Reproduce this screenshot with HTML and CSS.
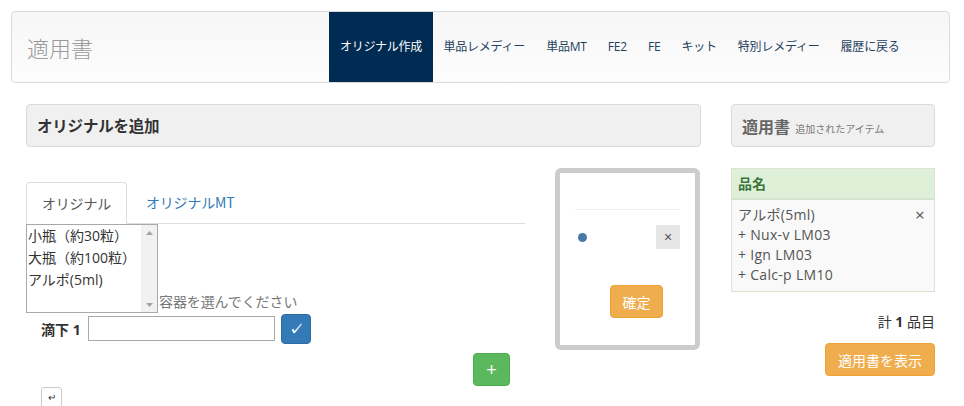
FILE: index.html
```html
<!DOCTYPE html>
<html lang="ja">
<head>
<meta charset="utf-8">
<title>適用書</title>
<link rel="stylesheet" href="styles.css">
</head>
<body>
<div class="page">
  <nav class="navbar">
    <div class="brand">適用書</div>
    <ul class="nav">
      <li class="active">オリジナル作成</li>
      <li>単品レメディー</li>
      <li>単品MT</li>
      <li>FE2</li>
      <li>FE</li>
      <li>キット</li>
      <li>特別レメディー</li>
      <li>履歴に戻る</li>
    </ul>
  </nav>
  <div class="main">
    <div class="left">
      <div class="panel-head"><h3 class="title">オリジナルを追加</h3></div>
      <div class="work">
        <div class="tabs-area">
          <ul class="tabs">
            <li class="tab active">オリジナル</li>
            <li class="tab">オリジナルMT</li>
          </ul>
          <div class="select-row">
            <div class="listbox">
              <div class="opts">
                <div class="opt">小瓶（約30粒）</div>
                <div class="opt">大瓶（約100粒）</div>
                <div class="opt">アルポ(5ml)</div>
              </div>
              <div class="sb">
                <svg class="arrow" width="7" height="4" viewBox="0 0 7 4"><path d="M0 4 L3.5 0 L7 4 Z" fill="#a3a3a3"/></svg>
                <svg class="arrow" width="7" height="4" viewBox="0 0 7 4"><path d="M0 0 L3.5 4 L7 0 Z" fill="#a3a3a3"/></svg>
              </div>
            </div>
            <span class="hint">容器を選んでください</span>
          </div>
          <div class="drop-row">
            <label class="drop-label">滴下 1</label>
            <input class="drop-input" type="text">
            <button class="btn-check">✓</button>
          </div>
          <div class="add-row"><button class="btn-add">+</button></div>
          <button class="btn-back">↵</button>
        </div>
        <div class="preview">
          <div class="rule"></div>
          <div class="prev-row"><span class="dot"></span><button class="btn-x">×</button></div>
          <button class="btn-confirm">確定</button>
        </div>
      </div>
    </div>
    <div class="right">
      <div class="panel-head"><h3 class="title-r">適用書 <small class="sub">追加されたアイテム</small></h3></div>
      <div class="cart">
        <div class="cart-head">品名</div>
        <div class="cart-body">
          <div class="cart-line"><span>アルポ(5ml)</span><span class="remove">×</span></div>
          <div class="cart-line">+ Nux-v LM03</div>
          <div class="cart-line">+ Ign LM03</div>
          <div class="cart-line">+ Calc-p LM10</div>
        </div>
      </div>
      <div class="total">計 <b>1</b> 品目</div>
      <div class="show-row"><button class="btn-show">適用書を表示</button></div>
    </div>
  </div>
</div>
</body>
</html>
```

FILE: styles.css
```css
* { box-sizing: border-box; }
html, body { margin: 0; padding: 0; background: #fff; }
body {
  font-family: "Open Sans", "Noto Sans CJK JP", sans-serif;
  font-size: 14px;
  color: #333;
}
.page { padding: 11px 14px 0 11px; }

.navbar {
  display: flex;
  height: 72px;
  border: 1px solid #dcdcdc;
  border-radius: 4px;
  background: linear-gradient(to bottom, #f6f6f6, #fdfdfd);
}
.brand {
  width: 317px;
  padding-left: 15px;
  font-size: 22px;
  line-height: 70px;
  color: #9a9a9a;
  font-family: "Noto Sans CJK JP", sans-serif;
  font-weight: 300;
}
.nav {
  list-style: none;
  margin: 0;
  padding: 0;
  display: flex;
}
.nav li {
  padding: 0 10.5px;
  line-height: 70px;
  font-size: 12px;
  letter-spacing: -0.2px;
  color: #1f3f5f;
}
.nav li.active {
  background: #002b52;
  color: #fff;
  padding: 0 11px;
  letter-spacing: -0.3px;
}

.main {
  display: grid;
  grid-template-columns: 675px 204px;
  gap: 30px;
  padding: 21px 15px 0 15px;
}

.panel-head {
  height: 43px;
  background: #f0f0f0;
  border: 1px solid #dadada;
  border-radius: 4px;
  display: flex;
  align-items: center;
  padding-left: 10px;
}
.title {
  margin: 0;
  font-size: 15.5px;
  font-weight: bold;
  color: #333;
  letter-spacing: -0.2px;
}
.title-r {
  margin: 0;
  font-size: 16px;
  font-weight: bold;
  color: #666;
}
.sub {
  font-size: 10px;
  font-weight: normal;
  color: #777;
  margin-left: 1px;
}

.work {
  display: flex;
  gap: 30px;
  margin-top: 21px;
}
.tabs-area { width: 499px; padding-top: 14px; }
.tabs {
  list-style: none;
  margin: 0;
  padding: 0;
  display: flex;
  border-bottom: 1px solid #ddd;
  height: 42px;
}
.tab {
  padding: 0 18px 0 19px;
  line-height: 40px;
  color: #337ab7;
  font-family: "Noto Sans CJK JP", sans-serif;
  font-size: 14px;
  letter-spacing: -0.2px;
}
.tab.active {
  color: #555;
  background: #fff;
  border: 1px solid #ddd;
  border-bottom-color: #fff;
  border-radius: 4px 4px 0 0;
  height: 42px;
  padding: 0 15px;
}

.select-row { display: flex; align-items: flex-end; }
.listbox {
  width: 132px;
  height: 89px;
  border: 1px solid #a9a9a9;
  display: flex;
  background: #fff;
}
.opts { flex: 1; min-width: 0; overflow: hidden; }
.opt {
  line-height: 22px;
  font-size: 14px;
  color: #333;
  white-space: nowrap;
  letter-spacing: 0;
  padding-left: 1px;
}
.sb {
  width: 16px;
  flex: none;
  background: #f1f1f1;
  display: flex;
  flex-direction: column;
  justify-content: space-between;
  align-items: center;
  padding: 6px 0 5px;
}
.hint {
  color: #777;
  font-size: 14px;
  line-height: 18px;
  margin: 0 0 2px 1px;
  letter-spacing: -0.1px;
}

.drop-row {
  display: flex;
  align-items: center;
  height: 31px;
  padding-left: 15px;
}
.drop-label {
  font-weight: bold;
  font-size: 14px;
  color: #333;
  width: 47px;
  letter-spacing: 0;
}
.drop-input {
  width: 187px;
  height: 25px;
  border: 1px solid #a9a9a9;
  margin: 0;
  padding: 0;
}
.btn-check {
  margin-left: 6px;
  width: 30px;
  height: 30px;
  border: 1px solid #2e6da4;
  border-radius: 4px;
  background: #337ab7;
  color: #fff;
  font-size: 14px;
  font-weight: bold;
  padding: 0;
}

.add-row {
  display: flex;
  justify-content: flex-end;
  padding-right: 15px;
  margin-top: 9px;
}
.btn-add {
  width: 37px;
  height: 33px;
  border: 1px solid #4cae4c;
  border-radius: 4px;
  background: #5cb85c;
  color: #fff;
  font-size: 18px;
  line-height: 1;
  padding: 0;
}
.btn-back {
  display: block;
  margin: 1px 0 0 15px;
  width: 21px;
  height: 22px;
  border: 1px solid #ccc;
  border-radius: 3px;
  background: #fff;
  color: #333;
  font-size: 10px;
  padding: 0;
  line-height: 1;
}

.preview {
  width: 145px;
  height: 182px;
  border: 5px solid #cccccc;
  border-radius: 6px;
  padding: 0 15px 0 15px;
  background: #fff;
}
.rule {
  margin-top: 36px;
  border-top: 1px solid #eee;
}
.prev-row {
  display: flex;
  justify-content: space-between;
  align-items: center;
  margin-top: 15px;
}
.dot {
  width: 9px;
  height: 9px;
  border-radius: 50%;
  background: #4a79a5;
  margin-left: 3px;
}
.btn-x {
  width: 24px;
  height: 24px;
  border: none;
  background: #e6e6e6;
  color: #555;
  font-size: 14px;
  padding: 0;
  line-height: 1;
}
.btn-confirm {
  display: block;
  margin: 36px 0 0 35px;
  width: 53px;
  height: 33px;
  border: 1px solid #eea236;
  border-radius: 4px;
  background: #f0ad4e;
  color: #fff;
  font-family: "Noto Sans CJK JP", sans-serif;
  font-size: 14px;
  padding: 0;
}

.cart {
  margin-top: 21px;
  border: 1px solid #dde3d0;
}
.cart-head {
  height: 31px;
  background: #dff0d8;
  border-bottom: 2px solid #d6e3cf;
  color: #3c763d;
  font-weight: bold;
  font-size: 14px;
  line-height: 29px;
  padding-left: 6px;
}
.cart-body {
  background: #f9f9f9;
  padding: 5px 0 6px 6px;
}
.cart-line {
  display: flex;
  justify-content: space-between;
  line-height: 20px;
  font-size: 14px;
  color: #555;
  letter-spacing: 0.3px;
}
.remove {
  font-size: 17px;
  color: #555;
  width: 19px;
  text-align: left;
}

.total {
  margin-top: 20px;
  text-align: right;
  line-height: 20px;
  font-size: 14px;
  color: #333;
}
.show-row { display: flex; justify-content: flex-end; margin-top: 11px; }
.btn-show {
  width: 110px;
  height: 33px;
  border: 1px solid #eea236;
  border-radius: 4px;
  background: #f0ad4e;
  color: #fff;
  font-family: "Noto Sans CJK JP", sans-serif;
  font-size: 14px;
  padding: 0;
}
```
